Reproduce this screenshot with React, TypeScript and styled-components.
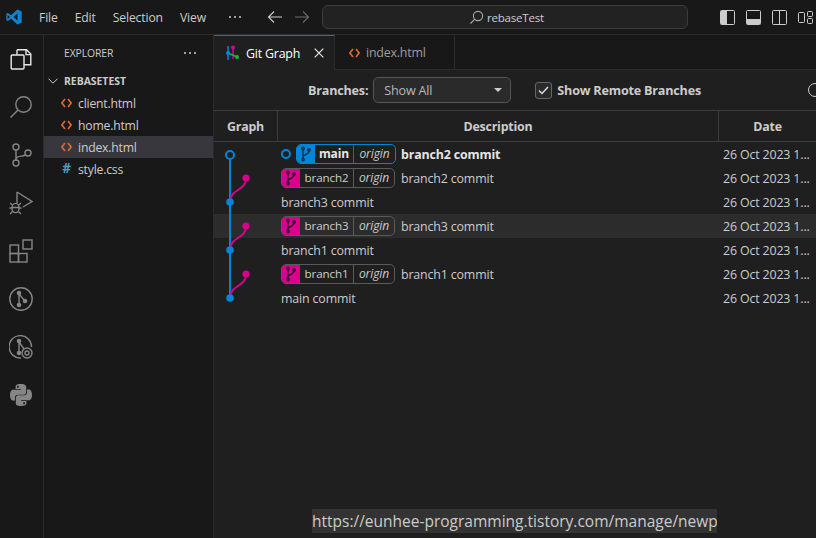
import React from "react";
import styled, { createGlobalStyle } from "styled-components";

const Global = createGlobalStyle`
  html, body { margin: 0; padding: 0; background: #181818; }
  * { box-sizing: border-box; }
  #root { width: 816px; height: 538px; overflow: hidden; }
`;

const FONT = `"Open Sans", "Noto Sans", "Liberation Sans", sans-serif`;

const Page = styled.div`
  width: 816px; height: 538px; display: flex; flex-direction: column;
  background: #181818; color: #ccc; font-family: ${FONT}; font-size: 12.5px; overflow: hidden; position: relative;
`;
const TitleBar = styled.header`
  height: 35px; flex: none; display: flex; align-items: center; background: #181818;
  border-bottom: 1px solid #2b2b2b; padding-left: 6px; position: relative;
`;
const Menu = styled.nav`
  display: flex; margin-left: 17px; gap: 17px; font-size: 12.2px; color: #ccc; letter-spacing: -0.15px;
`;
const MoreDots = styled.span`
  margin-left: 22px; display: flex; 
`;
const NavArrows = styled.div`
  display: flex; gap: 11px; margin-left: 25px; align-items: center;
`;
const CommandBox = styled.div`
  width: 366px; height: 24px; margin-left: 12px; border: 1px solid #3c3c3c; border-radius: 6px; background: #222;
  display: flex; align-items: center; justify-content: center; gap: 3px; font-size: 11.5px; color: #ccc; padding-top: 1px; padding-left: 3px; letter-spacing: -0.2px;
`;
const LayoutIcons = styled.div`
  display: flex; gap: 11px; margin-left: 32px;
`;
const Body = styled.div`
  flex: 1; display: flex; min-height: 0;
`;
const ActivityBar = styled.aside`
  width: 44px; flex: none; border-right: 1px solid #2b2b2b; display: flex; flex-direction: column; align-items: center;
  gap: 24px; padding-top: 12px; padding-right: 1px; color: #868686;
  svg { display: block; }
`;
const Sidebar = styled.aside`
  width: 170px; flex: none; border-right: 1px solid #2b2b2b; display: flex; flex-direction: column;
`;
const SideHead = styled.div`
  height: 35px; display: flex; align-items: center; justify-content: space-between; padding: 0 16px 0 20px;
  font-size: 10.4px; color: #ccc; letter-spacing: -0.1px;
`;
const FolderHead = styled.div`
  height: 22px; display: flex; align-items: center; gap: 6px; padding-left: 4px; font-size: 10.4px; font-weight: 700; color: #ccc;
`;
const FileRow = styled.div<{ $sel?: boolean }>`
  height: 22px; display: flex; align-items: center; padding-left: 17px; gap: 6px; background: ${p => p.$sel ? "#37373d" : "transparent"};
  font-size: 12.2px; letter-spacing: -0.2px; color: #ccc;
`;
const IconSlot = styled.span`
  width: 11px; display: inline-flex; justify-content: center; align-items: center; flex: none;
`;
const Hash = styled.span`
  color: #519aba; font-weight: 700; font-size: 13.5px; line-height: 1;
`;
const Editor = styled.main`
  flex: 1; min-width: 0; display: flex; flex-direction: column; background: #1f1f1f;
`;
const TabBar = styled.div`
  height: 35px; flex: none; display: flex; background: #181818; border-bottom: 1px solid #2b2b2b;
`;
const Tab = styled.div<{ $active?: boolean }>`
  width: ${p => p.$active ? "121px" : "120px"}; height: ${p => p.$active ? "35px" : "34px"}; display: flex; align-items: center;
  padding-left: ${p => p.$active ? "11px" : "14px"}; gap: ${p => p.$active ? "7px" : "6px"}; font-size: 12.4px; letter-spacing: -0.2px;
  border-right: 1px solid #2b2b2b; background: ${p => p.$active ? "#1f1f1f" : "#181818"};
  color: ${p => p.$active ? "#fff" : "#9d9d9d"}; border-top: 1px solid ${p => p.$active ? "#0078d4" : "#181818"};
`;
const CloseBtn = styled.span`
  margin-left: 7px; display: flex;
`;
const Controls = styled.div`
  height: 40px; flex: none; display: flex; align-items: center; padding-left: 94px; font-size: 12.6px; position: relative; overflow: hidden;
`;
const Label = styled.span`
  font-weight: 700; letter-spacing: -0.2px; white-space: nowrap; color: #ccc;
`;
const Select = styled.div`
  width: 138px; height: 26px; margin-left: 5px; border: 1px solid #555; border-radius: 5px; background: #2a2a2a;
  display: flex; align-items: center; justify-content: space-between; padding: 0 8px 0 10px; color: #b8b8b8; letter-spacing: -0.2px;
`;
const Caret = styled.span`
  width: 0; height: 0; border-left: 4px solid transparent; border-right: 4px solid transparent; border-top: 4px solid #ccc;
`;
const Check = styled.span`
  width: 17px; height: 17px; margin-left: 24px; margin-right: 5px; border: 1px solid #666; border-radius: 3px; background: #2a2a2a;
  display: flex; align-items: center; justify-content: center; flex: none;
`;
const FindIcon = styled.span`
  position: absolute; left: 594px; top: 13px; width: 14px; height: 14px; border: 1.5px solid #ccc; border-radius: 50%;
`;
const Table = styled.div`
  flex: 1; position: relative; min-height: 0;
`;
const HeaderRow = styled.div`
  height: 32px; display: grid; grid-template-columns: 64px 441px 1fr; border-top: 1px solid #3c3c3c; border-bottom: 1px solid #3c3c3c;
  font-weight: 700; font-size: 12.4px; letter-spacing: -0.2px; color: #ccc;
`;
const HeadCell = styled.div<{ $last?: boolean }>`
  display: flex; align-items: center; justify-content: center;
  border-right: ${p => p.$last ? "none" : "1px solid #3c3c3c"};
`;
const Row = styled.div<{ $hl?: boolean }>`
  height: 24px; display: grid; grid-template-columns: 64px 441px 1fr; align-items: center;
  background: ${p => p.$hl ? "#2c2c2c" : "transparent"}; font-size: 12.4px; letter-spacing: -0.15px; color: #ccc;
`;
const Desc = styled.div`
  display: flex; align-items: center; padding-left: 3px; white-space: nowrap; min-width: 0;
`;
const DateCell = styled.div`
  padding-left: 4px; white-space: nowrap; overflow: hidden;
`;
const HeadDot = styled.span`
  width: 10px; height: 10px; border-radius: 50%; border: 2px solid #0085d9; margin: 0 5px 0 0; flex: none;
`;
const Ref = styled.div<{ $c: string; $head?: boolean }>`
  height: 20px; display: flex; align-items: stretch; border: 1px solid ${p => p.$head ? p.$c : "#5a5a5a"}; border-radius: 5px;
  overflow: hidden; margin-right: ${p => p.$head ? "5px" : "6px"}; letter-spacing: -0.1px;
`;
const RefIcon = styled.span<{ $c: string }>`
  width: 18px; flex: none; background: ${p => p.$c}; display: flex; align-items: center; justify-content: center;
`;
const RefName = styled.span<{ $head?: boolean }>`
  width: ${p => p.$head ? "39px" : "54px"}; text-align: center; line-height: 18px; font-size: ${p => p.$head ? "12px" : "11.6px"};
  font-weight: ${p => p.$head ? 700 : 400}; border-right: 1px solid #5a5a5a; color: ${p => p.$head ? "#e6e6e6" : "#ccc"};
`;
const Origin = styled.span<{ $head?: boolean }>`
  width: ${p => p.$head ? "41px" : "40px"}; text-align: center; line-height: 18px; font-size: 12px; font-style: italic;
`;
const Msg = styled.span<{ $b?: boolean }>`
  font-weight: ${p => p.$b ? 700 : 400}; color: ${p => p.$b ? "#e6e6e6" : "#ccc"};
`;
const GraphSvg = styled.svg`
  position: absolute; left: 0; top: 32px; pointer-events: none;
`;
const UrlTip = styled.div`
  position: absolute; left: 312px; top: 509px; width: 405px; height: 24px; background: #333; color: #ccc;
  font-size: 15.5px; line-height: 24px; white-space: nowrap; overflow: hidden; letter-spacing: 0;
`;

const CodeIcon = ({ c = "#e2672f" }: { c?: string }) => (
  <svg width="11" height="10" viewBox="0 0 11 10" fill="none" stroke={c} strokeWidth="1.6"><path d="M4 1 0.9 5 4 9M7 1l3.1 4L7 9" /></svg>
);
const Dots = () => (
  <svg width="14" height="4" viewBox="0 0 14 4" fill="#ccc"><circle cx="2" cy="2" r="1" /><circle cx="7" cy="2" r="1" /><circle cx="12" cy="2" r="1" /></svg>
);
const BranchGlyph = ({ c }: { c: string }) => (
  <svg width="12" height="16" viewBox="0 0 12 16" fill="none" stroke={c} strokeWidth="1.4">
    <path d="M3 3v10M3 11c0-3 6-2 6-6" /><circle cx="3" cy="2.5" r="1.2" /><circle cx="3" cy="13.5" r="1.2" /><circle cx="9" cy="4" r="1.2" />
  </svg>
);
const VsLogo = () => (
  <svg width="16" height="16" viewBox="0 0 16 16">
    <path d="M11.4.6 15.7 2.6v10.8l-4.3 2L5 9.8 2 12.1.3 11.2V4.8L2 3.9l3 2.3z" fill="#0f82d2" />
    <path d="M11.5 4.6 7.5 8l4 3.4zM1.7 5.9v4.2L3.8 8z" fill="#181818" />
  </svg>
);

const rows = [
  { msg: "branch2 commit", head: true, name: "main", c: "#0085d9", b: true },
  { msg: "branch2 commit", name: "branch2", c: "#d9008f" },
  { msg: "branch3 commit" },
  { msg: "branch3 commit", name: "branch3", c: "#d9008f", hl: true },
  { msg: "branch1 commit" },
  { msg: "branch1 commit", name: "branch1", c: "#d9008f" },
  { msg: "main commit" },
];

export default function App() {
  return (
    <Page>
      <Global />
      <TitleBar>
        <VsLogo />
        <Menu><span>File</span><span>Edit</span><span>Selection</span><span>View</span></Menu>
        <MoreDots><Dots /></MoreDots>
        <NavArrows>
          <svg width="16" height="14" viewBox="0 0 16 14" fill="none" stroke="#ccc" strokeWidth="1.1"><path d="M15 7H1.5M7 1.5 1.5 7 7 12.5" /></svg>
          <svg width="16" height="14" viewBox="0 0 16 14" fill="none" stroke="#6a6a6a" strokeWidth="1.1"><path d="M1 7h13.5M9 1.5 14.5 7 9 12.5" /></svg>
        </NavArrows>
        <CommandBox>
          <svg width="15" height="15" viewBox="0 0 15 15" fill="none" stroke="#aaa" strokeWidth="1.1"><circle cx="9" cy="6" r="4.6" /><path d="M5.6 9.4 1.5 13.5" /></svg>
          <span>rebaseTest</span>
        </CommandBox>
        <LayoutIcons>
          <svg width="15" height="15" viewBox="0 0 15 15" fill="none" stroke="#ccc"><rect x="0.5" y="0.5" width="14" height="14" rx="1" /><rect x="1" y="1" width="6" height="13" fill="#ccc" stroke="none" /></svg>
          <svg width="15" height="15" viewBox="0 0 15 15" fill="none" stroke="#ccc"><rect x="0.5" y="0.5" width="14" height="14" rx="1" /><rect x="1" y="9" width="13" height="5" fill="#ccc" stroke="none" /></svg>
          <svg width="15" height="15" viewBox="0 0 15 15" fill="none" stroke="#ccc"><rect x="0.5" y="0.5" width="14" height="14" rx="1" /><path d="M7.5 1v13" /></svg>
          <svg width="15" height="15" viewBox="0 0 15 15" fill="none" stroke="#ccc"><rect x="0.5" y="2.5" width="6" height="10" rx="1" /><rect x="9.5" y="1.5" width="5" height="5" rx="1" /><rect x="9.5" y="8.5" width="5" height="5" rx="1" /></svg>
        </LayoutIcons>
      </TitleBar>
      <Body>
        <ActivityBar>
          <svg width="24" height="24" viewBox="0 0 24 24" fill="none" stroke="#e8e8e8" strokeWidth="1.4"><path d="M8 2.7h9.5l4.3 4.3v10.8H15" /><path d="M8 2.7v5" /><path d="M17 3v4.6h4.5" /><rect x="2.2" y="8" width="12.8" height="14" rx="1" /></svg>
          <svg width="24" height="24" viewBox="0 0 24 24" fill="none" stroke="currentColor" strokeWidth="1.4"><circle cx="14.5" cy="9.5" r="7.7" /><path d="M9 15 1.5 22.5" /></svg>
          <svg width="24" height="24" viewBox="0 0 24 24" fill="none" stroke="currentColor" strokeWidth="1.4"><circle cx="7" cy="4" r="3" /><circle cx="7" cy="20" r="3" /><circle cx="19" cy="10" r="3" /><path d="M7 7v10M7 16c0-4 9-2 9.5-4.5" /></svg>
          <svg width="24" height="24" viewBox="0 0 24 24" fill="none" stroke="currentColor" strokeWidth="1.4"><path d="M8 1v11M8 1l15 9.5L14 16" /><ellipse cx="6.5" cy="17" rx="3.6" ry="4.6" /><path d="M1 12l2.5 2M12 12l-2.5 2M0.5 17H3M10 17h2.5M1 23l2.5-2.5M12 23l-2.5-2.5M3 16.5h7" /></svg>
          <svg width="24" height="24" viewBox="0 0 24 24" fill="none" stroke="currentColor" strokeWidth="1.4"><rect x="1" y="6" width="8.5" height="8.5" /><rect x="1" y="14.5" width="8.5" height="8.5" /><rect x="9.5" y="14.5" width="8.5" height="8.5" /><rect x="14" y="1" width="9" height="9" /></svg>
          <svg width="24" height="24" viewBox="0 0 24 24" fill="none" stroke="currentColor" strokeWidth="1.4"><circle cx="12" cy="12" r="11.2" /><path d="M10 6v12M10 7l6 7" /><circle cx="10" cy="6" r="1.6" fill="currentColor" /><circle cx="10" cy="18" r="1.6" fill="currentColor" /><circle cx="16" cy="14" r="1.6" fill="currentColor" /></svg>
          <svg width="24" height="24" viewBox="0 0 24 24" fill="none" stroke="currentColor" strokeWidth="1.4"><path d="M22.5 12A11.2 11.2 0 1 0 12 23" /><path d="M10 6v12M10 7l5 7" /><circle cx="10" cy="6" r="1.6" fill="currentColor" /><circle cx="10" cy="18" r="1.6" fill="currentColor" /><circle cx="18" cy="18" r="5" /><circle cx="18" cy="18" r="2" /></svg>
          <svg width="24" height="24" viewBox="0 0 24 24" fill="currentColor"><path d="M11.9 1c-5.6 0-5.3 2.4-5.3 2.4v2.5h5.4v.8H4.5S1 6.300 1 12s3.100 5.500 3.100 5.500H6v-2.700s-.1-3.100 3-3.100h5.300s2.900 0 2.900-2.800V3.800S17.600 1 11.900 1zM8.900 2.700a1 1 0 1 1 0 2 1 1 0 0 1 0-2z" /><path d="M12.100 23c5.600 0 5.300-2.400 5.300-2.400v-2.500H12v-.8h7.500S23 17.700 23 12s-3.100-5.500-3.100-5.500H18v2.700s.1 3.100-3 3.100H9.700s-2.900 0-2.900 2.800v5.100S6.400 23 12.100 23zM15.100 21.300a1 1 0 1 1 0-2 1 1 0 0 1 0 2z" /></svg>
        </ActivityBar>
        <Sidebar>
          <SideHead><span>EXPLORER</span><Dots /></SideHead>
          <FolderHead>
            <svg width="10" height="6" viewBox="0 0 10 6" fill="none" stroke="#ccc" strokeWidth="1"><path d="M.5.7 5 5.200 9.500.7" /></svg>
            <span>REBASETEST</span>
          </FolderHead>
          <FileRow><IconSlot><CodeIcon /></IconSlot>client.html</FileRow>
          <FileRow><IconSlot><CodeIcon /></IconSlot>home.html</FileRow>
          <FileRow $sel><IconSlot><CodeIcon /></IconSlot>index.html</FileRow>
          <FileRow><IconSlot><Hash>#</Hash></IconSlot>style.css</FileRow>
        </Sidebar>
        <Editor>
          <TabBar>
            <Tab $active>
              <svg width="14" height="16" viewBox="0 0 14 16" fill="none" strokeWidth="1.500">
                <path d="M3 1v14" stroke="#0085d9" /><path d="M8 2v12" stroke="#d9008f" /><path d="M3 8l9 4" stroke="#0dbc3c" />
                <circle cx="3" cy="8" r="2" fill="#0085d9" stroke="none" /><circle cx="8" cy="2.500" r="2" fill="#d9008f" stroke="none" /><circle cx="12" cy="12" r="2" fill="#0dbc3c" stroke="none" />
              </svg>
              <span>Git Graph</span>
              <CloseBtn><svg width="10" height="10" viewBox="0 0 10 10" stroke="#e8e8e8" strokeWidth="1.200"><path d="M.7.700l8.600 8.600M9.300.7.700 9.300" /></svg></CloseBtn>
            </Tab>
            <Tab><CodeIcon /><span>index.html</span></Tab>
          </TabBar>
          <Controls>
            <Label>Branches:</Label>
            <Select><span>Show All</span><Caret /></Select>
            <Check><svg width="11" height="9" viewBox="0 0 11 9" fill="none" stroke="#ddd" strokeWidth="1.500"><path d="M1 4.500 4 7.500 10 1" /></svg></Check>
            <Label>Show Remote Branches</Label>
            <FindIcon />
          </Controls>
          <Table>
            <HeaderRow>
              <HeadCell>Graph</HeadCell>
              <HeadCell>Description</HeadCell>
              <HeadCell $last>Date</HeadCell>
            </HeaderRow>
            {rows.map((r, i) => (
              <Row key={i} $hl={r.hl}>
                <span />
                <Desc>
                  {r.head && <HeadDot />}
                  {r.name && r.c && (
                    <Ref $c={r.c} $head={r.head}>
                      <RefIcon $c={r.c}><BranchGlyph c={r.head ? "#14324a" : "#3a0a2a"} /></RefIcon>
                      <RefName $head={r.head}>{r.name}</RefName>
                      <Origin $head={r.head}>origin</Origin>
                    </Ref>
                  )}
                  <Msg $b={r.b}>{r.msg}</Msg>
                </Desc>
                <DateCell>26 Oct 2023 1...</DateCell>
              </Row>
            ))}
            <GraphSvg width="64" height="168" viewBox="0 0 64 168" fill="none">
              <path d="M16 13V156" stroke="#0085d9" strokeWidth="2" />
              <path d="M32 36C32 50 16 46 16 60M32 84C32 98 16 94 16 108M32 132C32 146 16 142 16 156" stroke="#d9008f" strokeWidth="2" />
              <circle cx="16" cy="13" r="4" fill="#1f1f1f" stroke="#0085d9" strokeWidth="2" />
              <circle cx="32" cy="36" r="3.600" fill="#d9008f" />
              <circle cx="32" cy="84" r="3.600" fill="#d9008f" />
              <circle cx="32" cy="132" r="3.600" fill="#d9008f" />
              <circle cx="16" cy="60" r="3.800" fill="#0085d9" />
              <circle cx="16" cy="108" r="3.800" fill="#0085d9" />
              <circle cx="16" cy="156" r="3.800" fill="#0085d9" />
            </GraphSvg>
          </Table>
        </Editor>
      </Body>
      <UrlTip>https://eunhee-programming.tistory.com/manage/newp</UrlTip>
    </Page>
  );
}
